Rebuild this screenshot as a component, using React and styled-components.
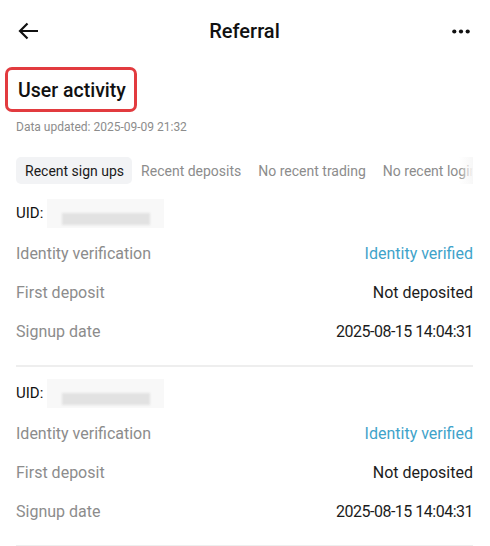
import styled, { createGlobalStyle } from "styled-components";

const GlobalStyle = createGlobalStyle`
  html, body {
    margin: 0;
    padding: 0;
    background: #ffffff;
  }
  body {
    font-family: Roboto, "Noto Sans", sans-serif;
    color: #111111;
    -webkit-font-smoothing: antialiased;
  }
`;

const Page = styled.div`
  width: 490px;
  height: 546px;
  overflow: hidden;
  background: #fff;
`;

const Header = styled.div`
  height: 62px;
  display: flex;
  align-items: center;
  justify-content: space-between;
  padding: 0 18px 0 17px;
`;

const HeaderTitle = styled.div`
  font-size: 20px;
  font-weight: 500;
  color: #111;
`;

const IconBox = styled.div`
  width: 22px;
  height: 22px;
  display: flex;
  align-items: center;
  justify-content: center;
`;

const Section = styled.div`
  padding: 0 17px 0 16px;
`;

const TitleBox = styled.div`
  display: inline-block;
  margin: 5px 0 0 -11px;
  padding: 9px 8px 6px 10px;
  border: 3px solid #e23b3f;
  border-radius: 7px;
  font-size: 19.5px;
  font-weight: 500;
  line-height: 24px;
  color: #111;
`;

const Updated = styled.div`
  margin-top: 8px;
  font-size: 12px;
  color: #8c8c8c;
`;

const TabStrip = styled.div`
  position: relative;
  margin-top: 23px;
  display: flex;
  overflow: hidden;
  white-space: nowrap;
`;

const Tab = styled.div`
  flex: none;
  height: 27px;
  padding: 0 8px 0 9px;
  display: flex;
  align-items: center;
  border-radius: 5px;
  font-size: 14px;
  color: ${(p) => (p.$active ? "#1a1a1a" : "#8c8c8c")};
  background: ${(p) => (p.$active ? "#f2f3f5" : "transparent")};
`;

const Fade = styled.div`
  position: absolute;
  top: 0;
  right: 0;
  width: 14px;
  height: 100%;
  background: linear-gradient(to right, rgba(255, 255, 255, 0), #f7f7f7);
`;

const Card = styled.div`
  padding: 15px 0 14px;
  border-bottom: 2px solid #eeeeee;
  & + & {
    padding-top: 12px;
  }
`;

const UidRow = styled.div`
  height: 28px;
  margin-bottom: 7px;
  display: flex;
  align-items: center;
  font-size: 15px;
  color: #111;
`;

const Blur = styled.div`
  margin-left: 4px;
  width: 117px;
  height: 29px;
  background: #f8f8f8;
  display: flex;
  align-items: flex-end;
  padding: 0 0 3px 15px;
  box-sizing: border-box;
`;

const BlurBar = styled.div`
  width: 88px;
  height: 12px;
  background: #e2e2e2;
  filter: blur(1px);
`;

const Row = styled.div`
  height: 39px;
  display: flex;
  align-items: center;
  justify-content: space-between;
  font-size: 16px;
`;

const Label = styled.span`
  color: #8c8c8c;
`;

const Value = styled.span`
  color: ${(p) => (p.$accent ? "#3fa3ca" : "#1c1c1c")};
  letter-spacing: ${(p) => (p.$tight ? "-0.5px" : "0")};
`;

const users = [
  { verified: "Identity verified", deposit: "Not deposited", date: "2025-08-15 14:04:31" },
  { verified: "Identity verified", deposit: "Not deposited", date: "2025-08-15 14:04:31" },
];

const tabs = ["Recent sign ups", "Recent deposits", "No recent trading", "No recent login"];

const App = () => {
  return (
    <Page>
      <GlobalStyle />
      <Header>
        <IconBox>
          <svg width="21" height="18" viewBox="0 0 21 18" fill="none">
            <path d="M20 9H2M9.5 1.5L2 9l7.5 7.5" stroke="#111" strokeWidth="2.2" strokeLinejoin="miter" />
          </svg>
        </IconBox>
        <HeaderTitle>Referral</HeaderTitle>
        <IconBox>
          <svg width="18" height="5" viewBox="0 0 18 5">
            <circle cx="2.3" cy="2.5" r="2.1" fill="#111" />
            <circle cx="9" cy="2.5" r="2.1" fill="#111" />
            <circle cx="15.7" cy="2.5" r="2.1" fill="#111" />
          </svg>
        </IconBox>
      </Header>
      <Section>
        <TitleBox>User activity</TitleBox>
        <Updated>Data updated: 2025-09-09 21:32</Updated>
        <TabStrip>
          {tabs.map((t, i) => (
            <Tab key={t} $active={i === 0}>
              {t}
            </Tab>
          ))}
          <Fade />
        </TabStrip>
        {users.map((u, i) => (
          <Card key={i}>
            <UidRow>
              UID:
              <Blur>
                <BlurBar />
              </Blur>
            </UidRow>
            <Row>
              <Label>Identity verification</Label>
              <Value $accent>{u.verified}</Value>
            </Row>
            <Row>
              <Label>First deposit</Label>
              <Value>{u.deposit}</Value>
            </Row>
            <Row>
              <Label>Signup date</Label>
              <Value $tight>{u.date}</Value>
            </Row>
          </Card>
        ))}
      </Section>
    </Page>
  );
};

export default App;
